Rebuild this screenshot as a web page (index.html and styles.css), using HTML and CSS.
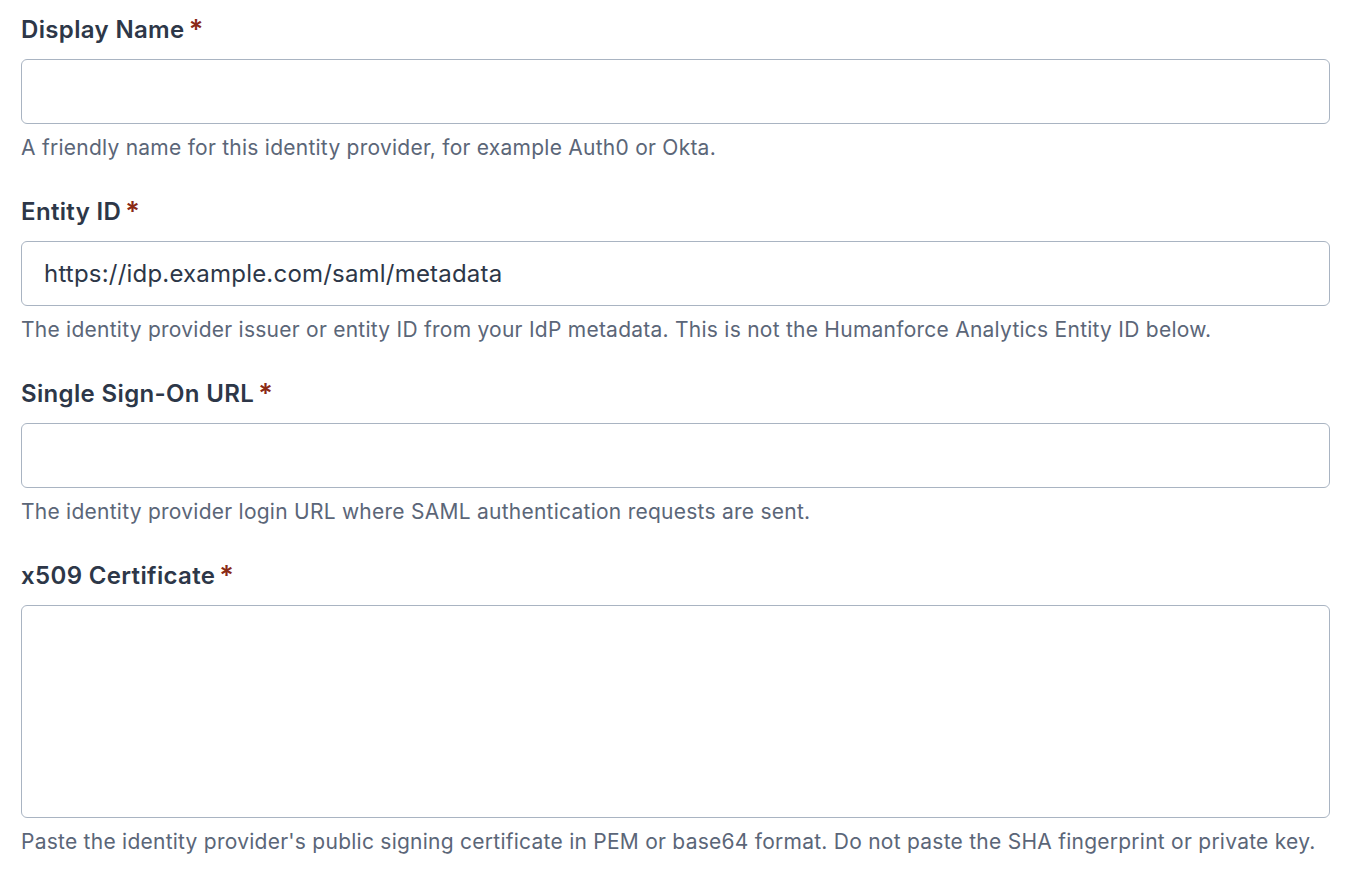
FILE: index.html
```html
<!DOCTYPE html>
<html lang="en">
<head>
    <meta charset="UTF-8">
    <meta name="viewport" content="width=device-width, initial-scale=1.0">
    <title>SAML Identity Provider</title>
    <link rel="stylesheet" href="styles.css">
</head>
<body>
    <form class="idp-form">
        <div class="field">
            <label for="displayName">Display Name<span class="required">*</span></label>
            <input type="text" id="displayName">
            <p class="hint">A friendly name for this identity provider, for example Auth0 or Okta.</p>
        </div>
        <div class="field">
            <label for="entityId">Entity ID<span class="required">*</span></label>
            <input type="text" id="entityId" value="https://idp.example.com/saml/metadata">
            <p class="hint">The identity provider issuer or entity ID from your IdP metadata. This is not the Humanforce Analytics Entity ID below.</p>
        </div>
        <div class="field">
            <label for="ssoUrl">Single Sign-On URL<span class="required">*</span></label>
            <input type="text" id="ssoUrl">
            <p class="hint">The identity provider login URL where SAML authentication requests are sent.</p>
        </div>
        <div class="field">
            <label for="certificate">x509 Certificate<span class="required">*</span></label>
            <textarea id="certificate"></textarea>
            <p class="hint">Paste the identity provider's public signing certificate in PEM or base64 format. Do not paste the SHA fingerprint or private key.</p>
        </div>
    </form>
</body>
</html>
```

FILE: styles.css
```css
body {
    font-family: Inter, 'Noto Sans', sans-serif;
    background-color: #ffffff;
    color: #2d3748;
    margin: 0;
    padding: 0;
}

.idp-form {
    padding: 12px 16px 0 21px;
    display: flex;
    flex-direction: column;
    gap: 32px;
}

.field {
    display: flex;
    flex-direction: column;
}

.field label {
    font-size: 24px;
    font-weight: 600;
    line-height: 36px;
    letter-spacing: 0.35px;
    color: #2d3748;
    margin-bottom: 11px;
}

.required {
    color: #8a2a16;
    font-size: 27px;
    margin-left: 4px;
    vertical-align: top;
}

.field input,
.field textarea {
    box-sizing: border-box;
    width: 100%;
    height: 65px;
    padding: 0 22px;
    border: 1px solid #a9b4c2;
    border-radius: 6px;
    font-family: Inter, sans-serif;
    font-size: 24px;
    letter-spacing: 0.2px;
    color: #2d3748;
    background-color: #fff;
    outline: none;
}

.field textarea {
    height: 213px;
    padding: 16px 22px;
    resize: none;
}

.hint {
    margin: 10px 0 0 0;
    font-size: 21px;
    line-height: 28px;
    letter-spacing: 0.25px;
    color: #5b6678;
}
```
